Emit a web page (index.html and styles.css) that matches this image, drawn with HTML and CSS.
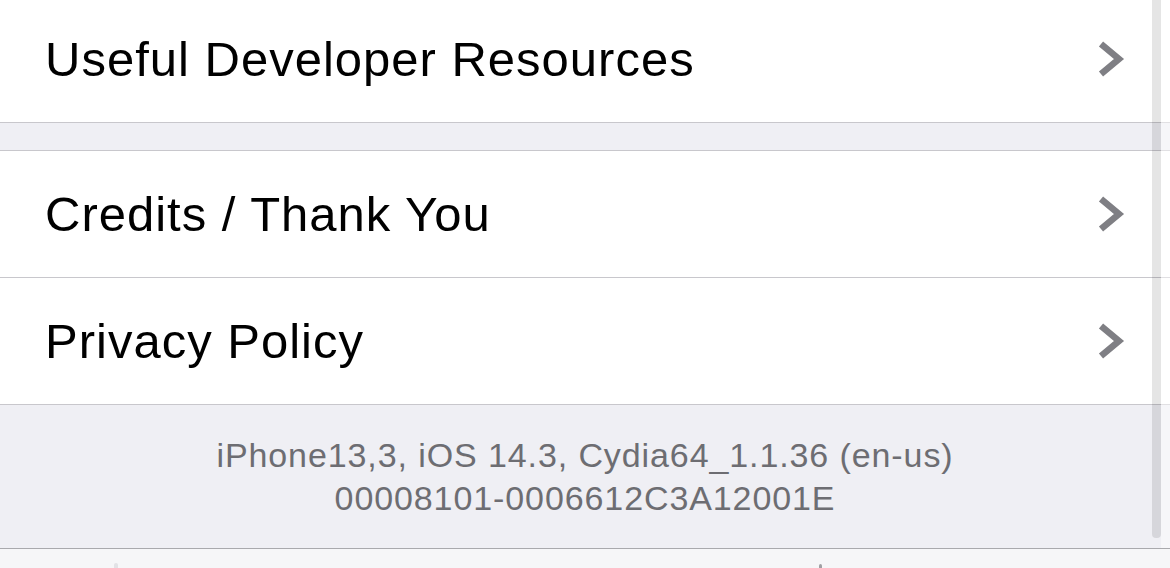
FILE: index.html
```html
<!DOCTYPE html>
<html lang="en">
<head>
  <meta charset="UTF-8" />
  <meta name="viewport" content="width=device-width, initial-scale=1.0"/>
  <title>Cydia - About</title>
  <link rel="stylesheet" href="styles.css">
</head>
<body>

<div class="screen">
  <div class="list">
    <div class="group first">
      <div class="row">
        <span class="label">Useful Developer Resources</span>
        <svg class="chevron" viewBox="0 0 30 40"><polyline points="5,5 23,20 5,35"/></svg>
      </div>
    </div>

    <div class="group">
      <div class="row">
        <span class="label">Credits / Thank You</span>
        <svg class="chevron" viewBox="0 0 30 40"><polyline points="5,5 23,20 5,35"/></svg>
      </div>
      <div class="row">
        <span class="label">Privacy Policy</span>
        <svg class="chevron" viewBox="0 0 30 40"><polyline points="5,5 23,20 5,35"/></svg>
      </div>
    </div>

    <div class="footer">
      <div>iPhone13,3, iOS 14.3, Cydia64_1.1.36 (en-us)</div>
      <div>00008101-0006612C3A12001E</div>
    </div>
  </div>

  <div class="scrollbar"></div>
  <div class="scroll-edge"></div>
</div>

<div class="tabbar">
  <span class="tab-tip left"></span>
  <span class="tab-tip right"></span>
</div>

</body>
</html>
```

FILE: styles.css
```css
body {
  margin: 0;
  font-family: 'Liberation Sans', Arial, sans-serif;
  background: #efeff4;
  overflow: hidden;
}

.screen {
  position: relative;
  height: 548px;
  overflow: hidden;
  border-bottom: 1px solid #a9a9ad;
}

.list {
  display: flex;
  flex-direction: column;
  margin-top: -4px;
}

.group {
  background: #fff;
  border-top: 1px solid #c8c7cc;
  border-bottom: 1px solid #c8c7cc;
  margin-bottom: 27px;
}

.group.first {
  border-top: none;
}

.row {
  height: 126px;
  display: flex;
  align-items: center;
  justify-content: space-between;
  padding: 0 46px 0 45px;
}

.row + .row {
  border-top: 1px solid #c8c7cc;
}

.label {
  font-size: 49px;
  color: #000;
  letter-spacing: 1px;
}

.chevron {
  width: 30px;
  height: 40px;
  margin-right: -2px;
  fill: none;
  stroke: #7f7f84;
  stroke-width: 6.5;
  stroke-linejoin: miter;
}

.footer {
  margin-top: -27px;
  height: 143px;
  display: flex;
  flex-direction: column;
  justify-content: center;
  align-items: center;
  font-size: 34px;
  line-height: 43px;
  letter-spacing: 0.9px;
  color: #6d6d72;
}

.scrollbar {
  position: absolute;
  top: 0;
  left: 1152px;
  width: 9px;
  height: 538px;
  background: rgba(0, 0, 0, 0.1);
  border-radius: 0 0 4px 4px;
}

.scroll-edge {
  position: absolute;
  top: 0;
  left: 1161px;
  width: 9px;
  height: 548px;
  background: rgba(255, 255, 255, 0.45);
}

.tabbar {
  height: 19px;
  background: #f6f6f8;
  position: relative;
}

.tab-tip {
  position: absolute;
  top: 14px;
  width: 4px;
  height: 5px;
  border-radius: 2px 2px 0 0;
  background: #e2e2e6;
}

.tab-tip.left {
  left: 114px;
}

.tab-tip.right {
  left: 819px;
  width: 3px;
  top: 15px;
  background: #a0a0a4;
}
```
